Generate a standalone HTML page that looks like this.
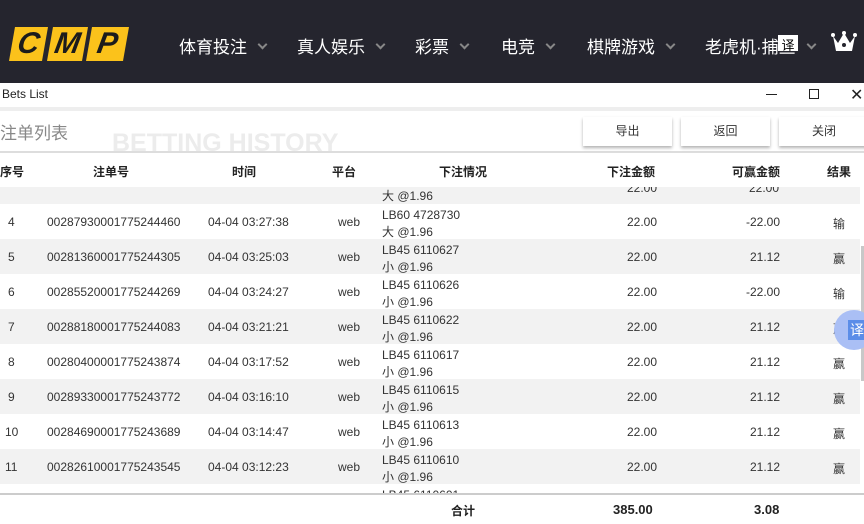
<!DOCTYPE html>
<html><head><meta charset="utf-8"><style>
*{margin:0;padding:0;box-sizing:border-box}
body{width:864px;height:524px;overflow:hidden;background:#fff;font-family:"Liberation Sans","Noto Sans CJK SC",sans-serif;position:relative}
.top{position:absolute;left:0;top:0;width:864px;height:83px;background:#25252e}
.lg{position:absolute;top:27px;height:34px;background:#fbc21b;transform:skewX(-10deg);color:#1c1c1c;font:italic bold 30px/34px "Liberation Sans",sans-serif;text-align:center}
.nav{position:absolute;top:33px;color:#fff;font-size:17px;white-space:nowrap}
.car{display:inline-block;width:7px;height:7px;border-right:2px solid #888;border-bottom:2px solid #888;transform:rotate(45deg);margin-left:12px;position:relative;top:-5px}
.a{position:absolute;white-space:nowrap}
.row{position:absolute;left:0;width:860px;height:35px;font-size:12px;color:#333}
.row span{position:absolute;white-space:nowrap}
.g{background:#f2f2f2}
.btn{position:absolute;top:117px;height:29px;background:#fff;box-shadow:0 2px 3px rgba(0,0,0,.3);font-size:12px;color:#333;text-align:center;line-height:29px}
.h{position:absolute;top:163px;font-size:12px;font-weight:bold;color:#222}
</style></head><body>
<div class="top">
<div class="lg" style="left:12px;width:33px">C</div>
<div class="lg" style="left:50px;width:35px">M</div>
<div class="lg" style="left:89px;width:37px">P</div>
<div class="nav" style="left:179px">体育投注<i class="car"></i></div>
<div class="nav" style="left:297px">真人娱乐<i class="car"></i></div>
<div class="nav" style="left:415px">彩票<i class="car"></i></div>
<div class="nav" style="left:501px">电竞<i class="car"></i></div>
<div class="nav" style="left:587px">棋牌游戏<i class="car"></i></div>
<div class="nav" style="left:705px">老虎机·捕鱼<i class="car"></i></div>
<div class="a" style="left:778px;top:35px;width:20px;height:16px;background:#fff;color:#000;font-size:13px;text-align:center">译</div>
<svg class="a" style="left:831px;top:31px" width="26" height="22" viewBox="0 0 26 22"><path d="M2 5 L7 12 L13 2 L19 12 L24 5 L21 20 L5 20 Z" fill="#fff"/><circle cx="2" cy="4" r="2" fill="#fff"/><circle cx="24" cy="4" r="2" fill="#fff"/><circle cx="13" cy="2" r="2" fill="#fff"/><circle cx="13" cy="14" r="2" fill="#25252e"/></svg>
</div>
<div class="a" style="left:2px;top:87px;font-size:12px;color:#222">Bets List</div>
<div class="a" style="left:766px;top:94px;width:11px;border-top:1px solid #222"></div>
<div class="a" style="left:809px;top:89px;width:10px;height:10px;border:1px solid #222"></div>
<div class="a" style="left:850px;top:85px;font-size:16px;color:#222">✕</div>
<div class="a" style="left:0;top:107px;width:864px;height:4px;background:#eee"></div>
<div class="a" style="left:0;top:119px;font-size:17px;color:#888">注单列表</div>
<div class="a" style="left:112px;top:129px;font-size:25px;font-weight:bold;color:#ececec">BETTING HISTORY</div>
<div class="a" style="left:0;top:151px;width:864px;height:2px;background:#ddd"></div>
<div class="btn" style="left:583px;width:89px">导出</div>
<div class="btn" style="left:681px;width:89px">返回</div>
<div class="btn" style="left:779px;width:90px">关闭</div>
<div class="h" style="left:0">序号</div><div class="h" style="left:93px">注单号</div><div class="h" style="left:232px">时间</div><div class="h" style="left:332px">平台</div><div class="h" style="left:439px">下注情况</div><div class="h" style="left:607px">下注金额</div><div class="h" style="left:732px">可赢金额</div><div class="h" style="left:827px">结果</div>
<div class="row g" style="top:187px;height:17px;overflow:hidden"><span style="left:382px;top:0">大 @1.96</span><span style="left:627px;top:-6px">22.00</span><span style="left:749px;top:-6px">22.00</span></div>
<div class="row" style="top:204px"><span style="left:8px;top:11px">4</span><span style="left:47px;top:11px">00287930001775244460</span><span style="left:208px;top:11px">04-04 03:27:38</span><span style="left:338px;top:11px">web</span><span style="left:382px;top:4px">LB60 4728730</span><span style="left:382px;top:19px">大 @1.96</span><span style="left:627px;top:11px">22.00</span><span style="left:746px;top:11px">-22.00</span><span style="left:833px;top:11px">输</span></div>
<div class="row g" style="top:239px"><span style="left:8px;top:11px">5</span><span style="left:47px;top:11px">00281360001775244305</span><span style="left:208px;top:11px">04-04 03:25:03</span><span style="left:338px;top:11px">web</span><span style="left:382px;top:4px">LB45 6110627</span><span style="left:382px;top:19px">小 @1.96</span><span style="left:627px;top:11px">22.00</span><span style="left:750px;top:11px">21.12</span><span style="left:833px;top:11px">赢</span></div>
<div class="row" style="top:274px"><span style="left:8px;top:11px">6</span><span style="left:47px;top:11px">00285520001775244269</span><span style="left:208px;top:11px">04-04 03:24:27</span><span style="left:338px;top:11px">web</span><span style="left:382px;top:4px">LB45 6110626</span><span style="left:382px;top:19px">小 @1.96</span><span style="left:627px;top:11px">22.00</span><span style="left:746px;top:11px">-22.00</span><span style="left:833px;top:11px">输</span></div>
<div class="row g" style="top:309px"><span style="left:8px;top:11px">7</span><span style="left:47px;top:11px">00288180001775244083</span><span style="left:208px;top:11px">04-04 03:21:21</span><span style="left:338px;top:11px">web</span><span style="left:382px;top:4px">LB45 6110622</span><span style="left:382px;top:19px">小 @1.96</span><span style="left:627px;top:11px">22.00</span><span style="left:750px;top:11px">21.12</span><span style="left:833px;top:11px">赢</span></div>
<div class="row" style="top:344px"><span style="left:8px;top:11px">8</span><span style="left:47px;top:11px">00280400001775243874</span><span style="left:208px;top:11px">04-04 03:17:52</span><span style="left:338px;top:11px">web</span><span style="left:382px;top:4px">LB45 6110617</span><span style="left:382px;top:19px">小 @1.96</span><span style="left:627px;top:11px">22.00</span><span style="left:750px;top:11px">21.12</span><span style="left:833px;top:11px">赢</span></div>
<div class="row g" style="top:379px"><span style="left:8px;top:11px">9</span><span style="left:47px;top:11px">00289330001775243772</span><span style="left:208px;top:11px">04-04 03:16:10</span><span style="left:338px;top:11px">web</span><span style="left:382px;top:4px">LB45 6110615</span><span style="left:382px;top:19px">小 @1.96</span><span style="left:627px;top:11px">22.00</span><span style="left:750px;top:11px">21.12</span><span style="left:833px;top:11px">赢</span></div>
<div class="row" style="top:414px"><span style="left:5px;top:11px">10</span><span style="left:47px;top:11px">00284690001775243689</span><span style="left:208px;top:11px">04-04 03:14:47</span><span style="left:338px;top:11px">web</span><span style="left:382px;top:4px">LB45 6110613</span><span style="left:382px;top:19px">小 @1.96</span><span style="left:627px;top:11px">22.00</span><span style="left:750px;top:11px">21.12</span><span style="left:833px;top:11px">赢</span></div>
<div class="row g" style="top:449px"><span style="left:5px;top:11px">11</span><span style="left:47px;top:11px">00282610001775243545</span><span style="left:208px;top:11px">04-04 03:12:23</span><span style="left:338px;top:11px">web</span><span style="left:382px;top:4px">LB45 6110610</span><span style="left:382px;top:19px">小 @1.96</span><span style="left:627px;top:11px">22.00</span><span style="left:750px;top:11px">21.12</span><span style="left:833px;top:11px">赢</span></div>
<div class="row" style="top:484px;height:10px;overflow:hidden"><span style="left:382px;top:4px">LB45 6110601</span></div>
<div class="a" style="left:0;top:493px;width:864px;height:2px;background:#ccc"></div>
<div class="a" style="left:451px;top:502px;font-size:12px;font-weight:bold;color:#222">合计</div>
<div class="a" style="left:613px;top:502px;font-size:13px;font-weight:bold;color:#222">385.00</div>
<div class="a" style="left:754px;top:502px;font-size:13px;font-weight:bold;color:#222">3.08</div>
<div class="a" style="left:861px;top:246px;width:3px;height:135px;background:#c8c8c8"></div>
<div class="a" style="left:834px;top:310px;width:40px;height:40px;border-radius:20px;background:#aabff5"></div>
<div class="a" style="left:848px;top:320px;width:18px;height:20px;background:#5b8de8;color:#fff;font-size:14px;text-align:center;line-height:20px">译</div>
</body></html>
